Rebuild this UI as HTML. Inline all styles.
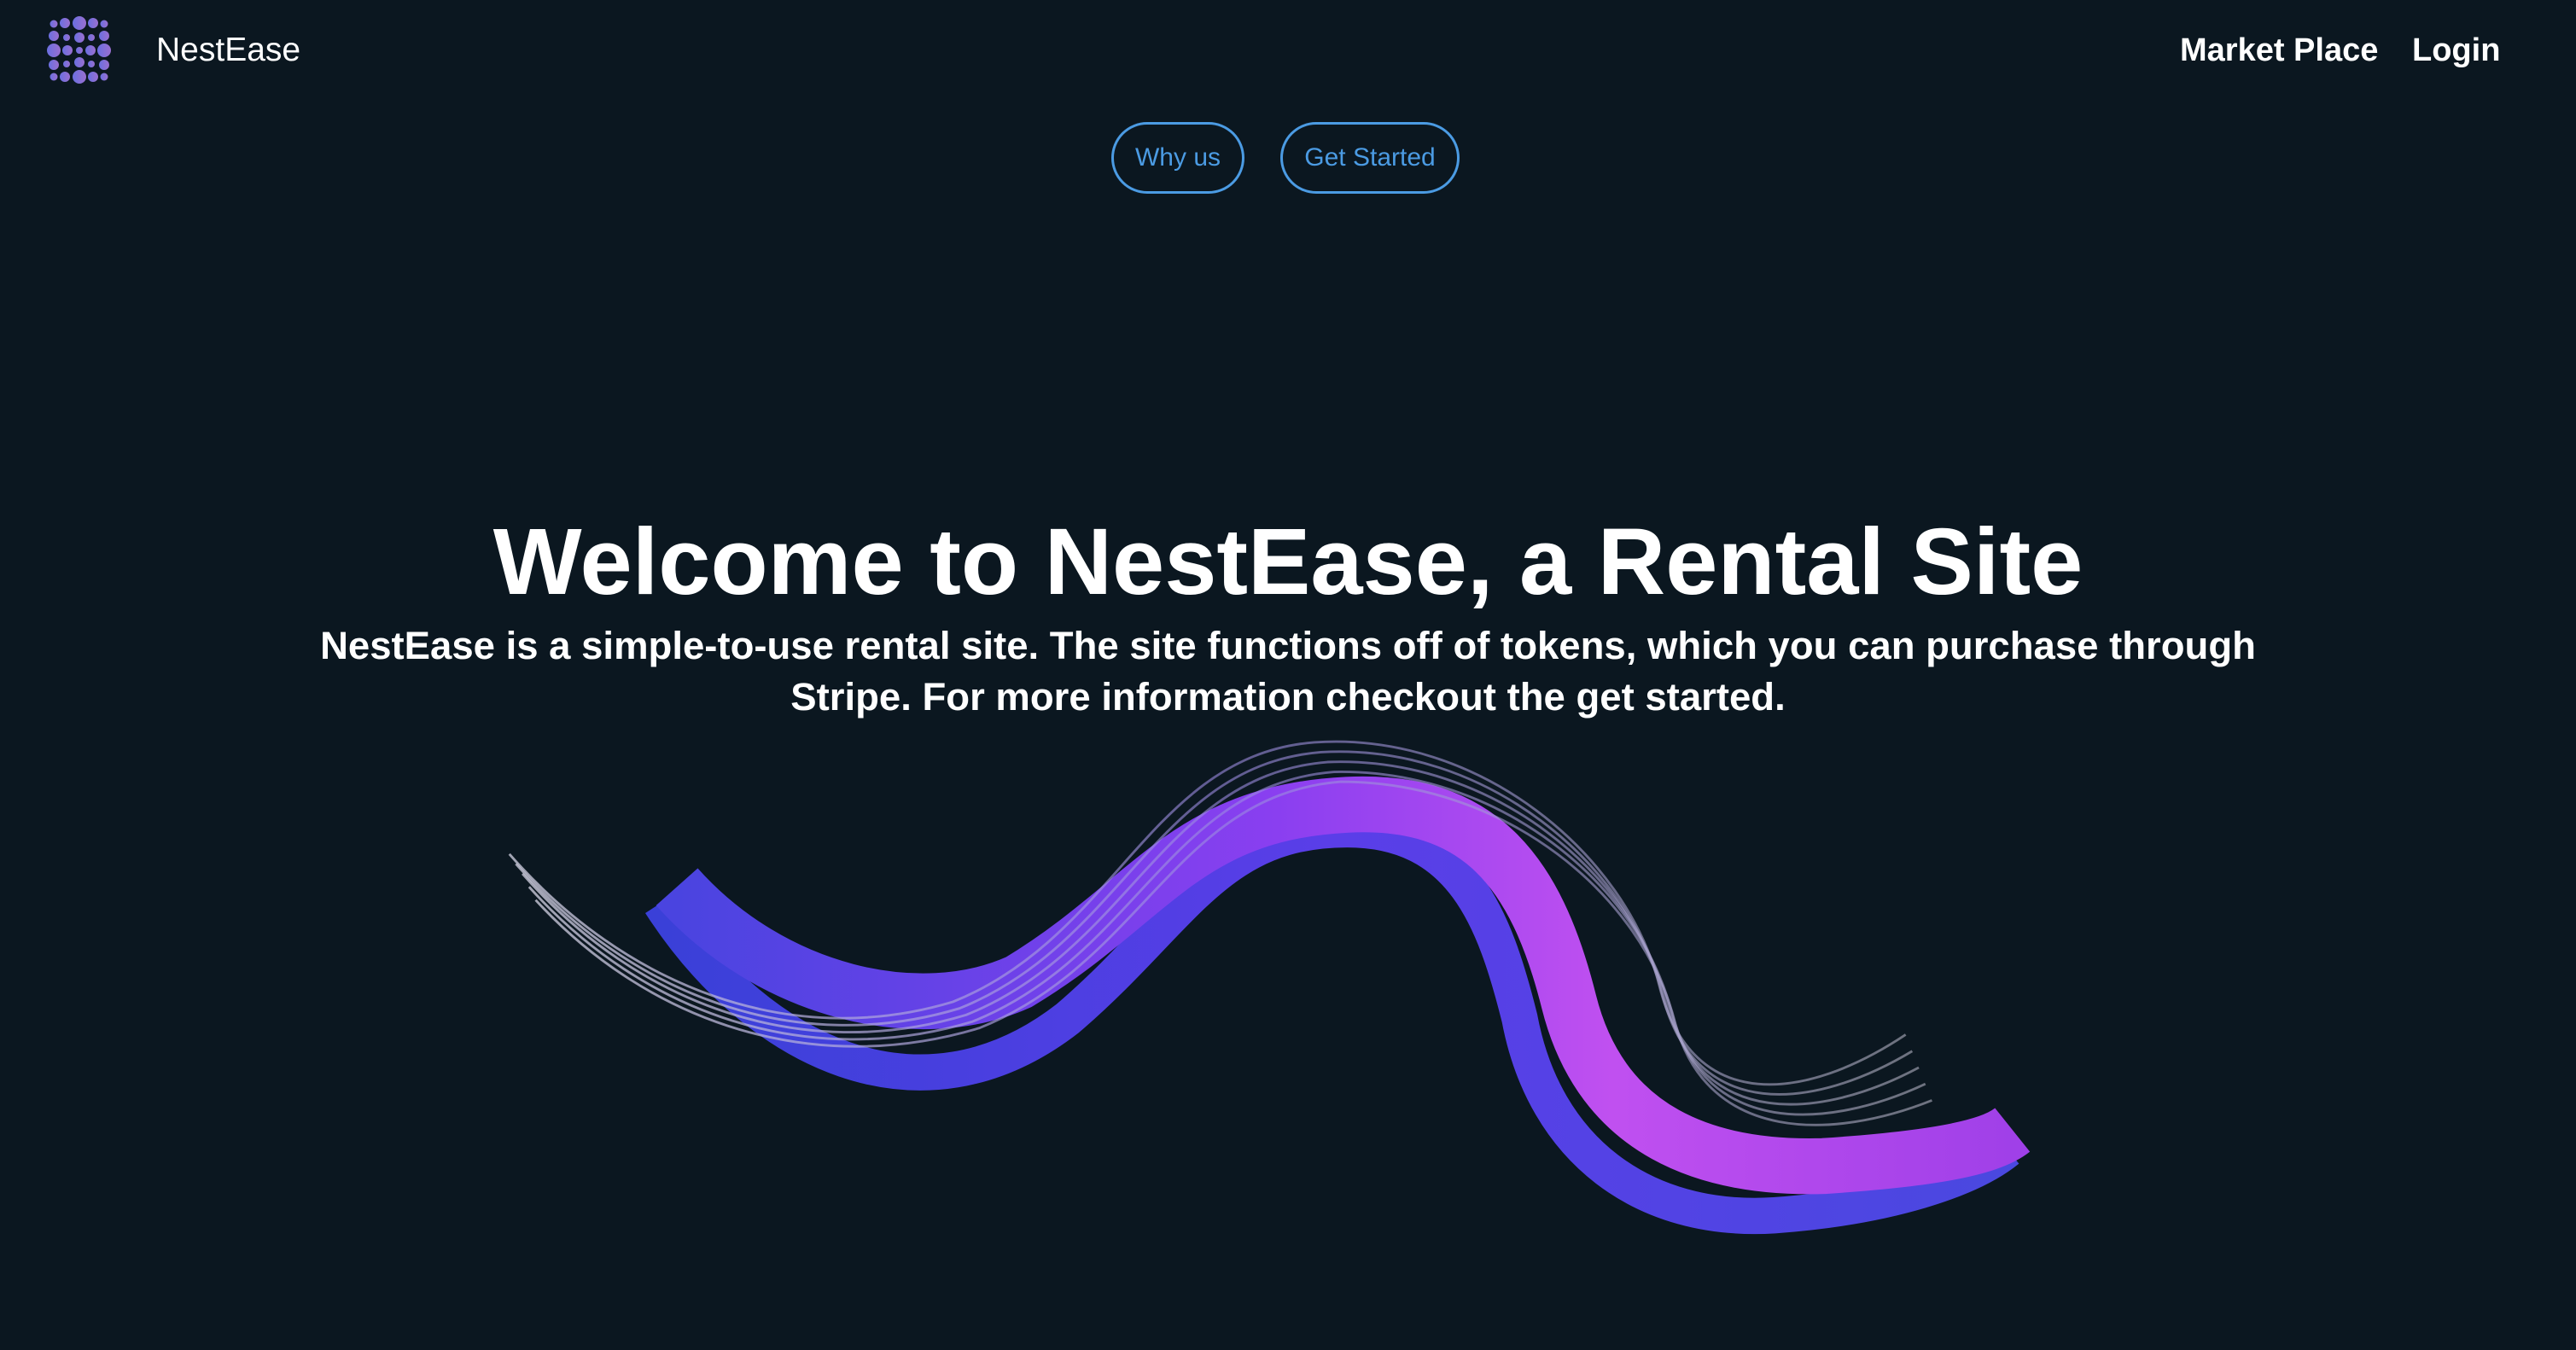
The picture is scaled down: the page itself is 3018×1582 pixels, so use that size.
<!DOCTYPE html>
<html><head><meta charset="utf-8"><style>
html,body{margin:0;padding:0;background:#0b1720;width:3018px;height:1582px;overflow:hidden;font-family:"Liberation Sans",Arial,sans-serif;color:#fff}
.brand{position:absolute;left:183px;top:37px;font-size:39px;color:#fff}
.nav{position:absolute;top:38px;font-size:38px;font-weight:bold}
.btn{position:absolute;top:143px;height:78px;border:3px solid #4b9be3;border-radius:42px;color:#4b9be3;font-size:30px;line-height:78px;text-align:center;box-sizing:content-box}
h1{position:absolute;left:0;width:3018px;top:594px;margin:0;text-align:center;font-size:110px;font-weight:bold;line-height:130px}
.sub{position:absolute;left:340px;width:2338px;top:727px;text-align:center;font-size:45.5px;font-weight:bold;line-height:60px}
</style></head><body>
<svg style="position:absolute;left:0;top:0" width="150" height="110" viewBox="0 0 150 110">
<defs><linearGradient id="lg" x1="0" x2="1"><stop offset="0" stop-color="#6a6fe0"/><stop offset="1" stop-color="#9a6fd0"/></linearGradient></defs>
<g fill="url(#lg)">
<circle cx="63" cy="28" r="4.5"/><circle cx="76" cy="27" r="6"/><circle cx="93" cy="27" r="8"/><circle cx="109" cy="27" r="6"/><circle cx="122" cy="28" r="4.5"/>
<circle cx="63" cy="42" r="6"/><circle cx="78" cy="44" r="4"/><circle cx="93" cy="44" r="6"/><circle cx="107" cy="44" r="4"/><circle cx="122" cy="42" r="6"/>
<circle cx="63" cy="59" r="8"/><circle cx="79" cy="59" r="6"/><circle cx="93" cy="59" r="4"/><circle cx="106" cy="59" r="6"/><circle cx="122" cy="59" r="8"/>
<circle cx="63" cy="76" r="6"/><circle cx="78" cy="75" r="4"/><circle cx="93" cy="73" r="6"/><circle cx="107" cy="75" r="4"/><circle cx="122" cy="76" r="6"/>
<circle cx="63" cy="90" r="4.5"/><circle cx="76" cy="90" r="6"/><circle cx="93" cy="90" r="8"/><circle cx="109" cy="90" r="6"/><circle cx="122" cy="90" r="4.5"/>
</g></svg>
<div class="brand">NestEase</div>
<div class="nav" style="left:2554px">Market Place</div>
<div class="nav" style="left:2826px">Login</div>
<div class="btn" style="left:1302px;width:150px">Why us</div>
<div class="btn" style="left:1500px;width:204px">Get Started</div>
<h1>Welcome to NestEase, a Rental Site</h1>
<div class="sub">NestEase is a simple-to-use rental site. The site functions off of tokens, which you can purchase through Stripe. For more information checkout the get started.</div>
<svg style="position:absolute;left:0;top:0" width="3018" height="1582" viewBox="0 0 1568 822">
<defs>
<linearGradient id="g1" x1="0" x2="1"><stop offset="0" stop-color="#4a44e0"/><stop offset=".45" stop-color="#8a3ff0"/><stop offset=".7" stop-color="#c050f0"/><stop offset="1" stop-color="#a040e8"/></linearGradient>
<linearGradient id="g2" x1="0" x2="1"><stop offset="0" stop-color="#3a40d8"/><stop offset=".5" stop-color="#5a3ee8"/><stop offset="1" stop-color="#4a48e0"/></linearGradient>
<linearGradient id="g3" x1="0" x2="1"><stop offset="0" stop-color="#c8c8d8" stop-opacity=".8"/><stop offset=".5" stop-color="#9a8ae0" stop-opacity=".6"/><stop offset="1" stop-color="#b0b0c0" stop-opacity=".6"/></linearGradient>
</defs>
<path d="M402,550 C460,640 560,690 650,620 C720,560 740,505 820,505 C890,505 910,560 925,620 C940,700 1000,745 1080,740 C1150,735 1200,718 1222,700" fill="none" stroke="url(#g2)" stroke-width="22" stroke-linecap="butt"/>
<path d="M412,540 C470,605 560,625 620,598 C700,550 720,495 820,490 C900,486 935,530 955,610 C975,690 1040,712 1110,710 C1170,706 1210,700 1225,688" fill="none" stroke="url(#g1)" stroke-width="34" stroke-linecap="butt"/>
<g fill="none" stroke="url(#g3)" stroke-width="1.5">
<path d="M310,520 C380,600 480,640 580,610 C680,570 700,460 800,452 C900,445 990,520 1010,600 C1030,680 1100,670 1160,630"/>
<path d="M314,526 C384,606 484,644 584,614 C684,574 704,466 804,458 C904,452 992,526 1012,606 C1032,684 1104,676 1164,640"/>
<path d="M318,532 C388,612 488,648 588,618 C688,578 708,472 808,464 C908,460 995,532 1015,612 C1035,688 1108,682 1168,650"/>
<path d="M322,540 C392,618 492,652 592,622 C692,582 712,478 812,470 C912,468 998,538 1018,618 C1038,692 1112,688 1172,660"/>
<path d="M326,548 C396,624 496,656 596,626 C696,586 716,484 816,476 C916,476 1000,544 1020,624 C1040,696 1116,694 1176,670"/>
</g>
</svg>
</body></html>
